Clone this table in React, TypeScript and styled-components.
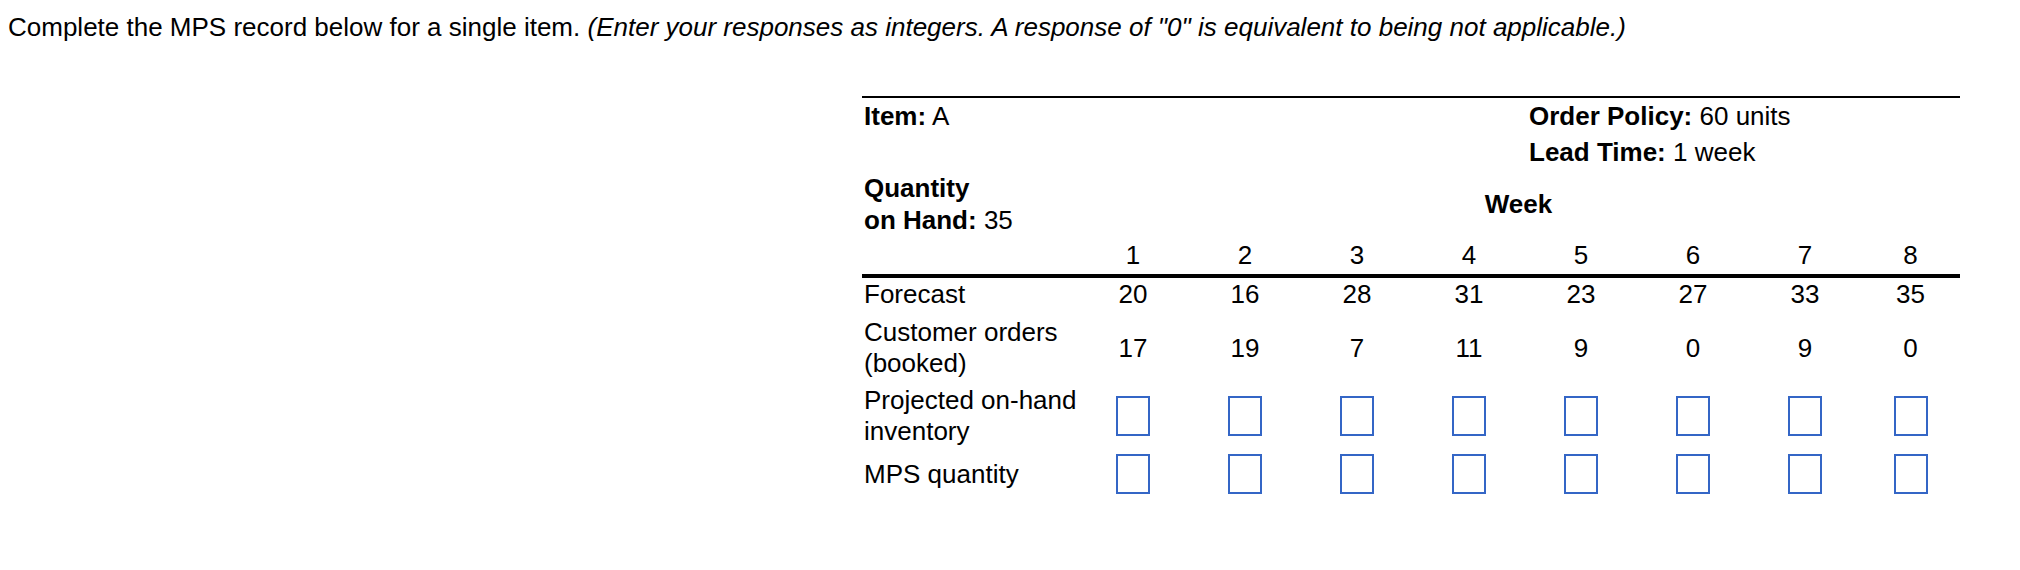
import React from 'react'
import styled, { createGlobalStyle } from 'styled-components'

const GlobalStyle = createGlobalStyle`
  html, body {
    margin: 0;
    padding: 0;
    background: #fff;
  }
  body {
    font-family: 'Liberation Sans', Arial, sans-serif;
    font-size: 26px;
    line-height: 31px;
    color: #000;
  }
`

const Page = styled.div`
  padding: 12px 8px 0 8px;
`

const Prompt = styled.p`
  margin: 0;
  white-space: nowrap;

  em {
    font-style: italic;
  }
`

const Record = styled.div`
  margin: 53px 0 0 854px;
  width: 1098px;
  border-top: 2px solid #000;
`

// every row shares the same column template so cells line up
const Row = styled.div<{ $pad?: string; $rule?: boolean }>`
  display: grid;
  grid-template-columns: 215px repeat(7, 112px) 99px;
  align-items: center;
  padding: ${(p) => p.$pad || '0'};
  border-bottom: ${(p) => (p.$rule ? '4px solid #000' : 'none')};
`

const MetaLine = styled.div`
  grid-column: 1 / 6;
  padding-left: 2px;
  line-height: 36px;
`

const Policy = styled.div`
  grid-column: 6 / -1;
  padding-left: 4px;
  line-height: 36px;
`

const Label = styled.div<{ $lh?: number }>`
  grid-column: 1;
  padding-left: 2px;
  white-space: nowrap;
  line-height: ${(p) => (p.$lh ? `${p.$lh}px` : 'inherit')};
`

const WeekTitle = styled.div`
  grid-column: 2 / -1;
  text-align: center;
  font-weight: bold;
`

const Cell = styled.div`
  text-align: center;
`

const AnswerBox = styled.input`
  display: block;
  margin: 0 auto;
  box-sizing: border-box;
  width: 34px;
  height: 40px;
  padding: 0 4px;
  border: 2px solid #3466c6;
  border-radius: 0;
  background: #fff;
  font: inherit;
  outline: none;
`

const weeks = [1, 2, 3, 4, 5, 6, 7, 8]
const forecast = [20, 16, 28, 31, 23, 27, 33, 35]
const booked = [17, 19, 7, 11, 9, 0, 9, 0]

const App = () => {
  return (
    <Page>
      <GlobalStyle />
      <Prompt>
        Complete the MPS record below for a single item.{' '}
        <em>
          (Enter your responses as integers. A response of "0" is equivalent to
          being not applicable.)
        </em>
      </Prompt>

      <Record>
        <Row>
          <MetaLine>
            <b>Item:</b> A
          </MetaLine>
          <Policy>
            <b>Order Policy:</b> 60 units
          </Policy>
        </Row>
        <Row>
          <Policy>
            <b>Lead Time:</b> 1 week
          </Policy>
        </Row>
        <Row $pad="2px 0 0 0">
          <Label $lh={32}>
            <b>Quantity</b>
            <br />
            <b>on Hand:</b> 35
          </Label>
          <WeekTitle>Week</WeekTitle>
        </Row>
        <Row $pad="4px 0 3px 0" $rule>
          <Label />
          {weeks.map((w) => (
            <Cell key={w}>{w}</Cell>
          ))}
        </Row>

        <Row $pad="1px 0 7px 0">
          <Label>Forecast</Label>
          {forecast.map((v, i) => (
            <Cell key={i}>{v}</Cell>
          ))}
        </Row>
        <Row>
          <Label>
            Customer orders
            <br />
            (booked)
          </Label>
          {booked.map((v, i) => (
            <Cell key={i}>{v}</Cell>
          ))}
        </Row>
        <Row $pad="6px 0 0 0">
          <Label>
            Projected on-hand
            <br />
            inventory
          </Label>
          {weeks.map((w) => (
            <Cell key={w}>
              <AnswerBox aria-label={`Projected on-hand inventory week ${w}`} />
            </Cell>
          ))}
        </Row>
        <Row $pad="7px 0 0 0">
          <Label>MPS quantity</Label>
          {weeks.map((w) => (
            <Cell key={w}>
              <AnswerBox aria-label={`MPS quantity week ${w}`} />
            </Cell>
          ))}
        </Row>
      </Record>
    </Page>
  )
}

export default App
